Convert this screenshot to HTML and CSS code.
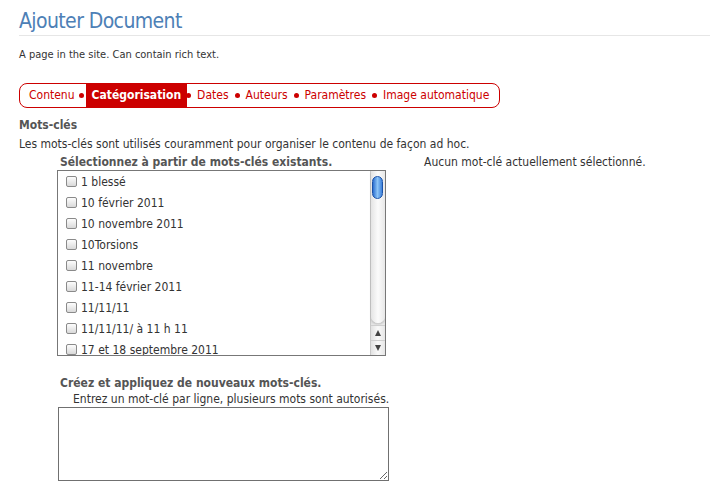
FILE: index.html
```html
<!DOCTYPE html>
<html lang="fr">
<head>
<meta charset="utf-8">
<title>Ajouter Document</title>
<link rel="stylesheet" href="styles.css">
</head>
<body>
<div class="page">
  <h1 class="title">Ajouter Document</h1>
  <p class="doc-desc">A page in the site. Can contain rich text.</p>

  <nav class="tabs">
    <span class="tab">Contenu</span><span class="dot"></span>
    <span class="tab active">Catégorisation</span><span class="dot"></span>
    <span class="tab">Dates</span><span class="dot"></span>
    <span class="tab">Auteurs</span><span class="dot"></span>
    <span class="tab">Paramètres</span><span class="dot"></span>
    <span class="tab">Image automatique</span>
  </nav>

  <section class="field">
    <div class="field-label">Mots-clés</div>
    <div class="field-help">Les mots-clés sont utilisés couramment pour organiser le contenu de façon ad hoc.</div>

    <div class="kw-row">
      <div class="kw-select">
        <div class="sub-label">Sélectionnez à partir de mots-clés existants.</div>
        <div class="listbox">
          <ul class="items">
            <li class="item"><span class="check"></span>1 blessé</li>
            <li class="item"><span class="check"></span>10 février 2011</li>
            <li class="item"><span class="check"></span>10 novembre 2011</li>
            <li class="item"><span class="check"></span>10Torsions</li>
            <li class="item"><span class="check"></span>11 novembre</li>
            <li class="item"><span class="check"></span>11-14 février 2011</li>
            <li class="item"><span class="check"></span>11/11/11</li>
            <li class="item"><span class="check"></span>11/11/11/ à 11 h 11</li>
            <li class="item"><span class="check"></span>17 et 18 septembre 2011</li>
          </ul>
          <div class="scrollbar">
            <div class="track"><div class="thumb"></div></div>
            <div class="arrow up"><span class="tri-up"></span></div>
            <div class="arrow down"><span class="tri-down"></span></div>
          </div>
        </div>
      </div>
      <div class="kw-current">Aucun mot-clé actuellement sélectionné.</div>
    </div>

    <div class="kw-new">
      <div class="sub-label">Créez et appliquez de nouveaux mots-clés.</div>
      <div class="sub-help">Entrez un mot-clé par ligne, plusieurs mots sont autorisés.</div>
      <textarea class="kw-text"></textarea>
    </div>
  </section>
</div>
</body>
</html>
```
FILE: styles.css
```css
* { box-sizing: border-box; }
html, body { margin: 0; padding: 0; background: #fff; }
body {
  font-family: "DejaVu Sans Condensed", "DejaVu Sans", sans-serif;
  color: #333;
  font-size: 12px;
}
.page { padding: 0 10px 0 19px; }

.title {
  margin: 0;
  padding: 8px 0 1px;
  font-size: 21px;
  line-height: 26px;
  letter-spacing: -0.6px;
  font-weight: normal;
  color: #4d80b6;
  border-bottom: 1px solid #e6e6e6;
}
.doc-desc {
  margin: 12px 0 0;
  font-size: 11px;
  line-height: 14px;
  color: #333;
}

.tabs {
  margin-top: 21px;
  display: inline-flex;
  align-items: center;
  height: 25px;
  border: 1px solid #cc0000;
  border-radius: 8px;
  padding: 0 10px 0 9px;
}
.tab {
  color: #cc0000;
  line-height: 23px;
  padding: 0 6px;
  white-space: nowrap;
}
.tab:first-child { padding-left: 0; padding-right: 4px; }
.tab:last-child { padding-right: 0; }
.tab.active {
  background: #cc0000;
  color: #fff;
  font-weight: bold;
  padding: 0 6px;
  margin: 0 -1px 0 2px;
  align-self: stretch;
  line-height: 23px;
}
.dot {
  width: 5px;
  height: 5px;
  border-radius: 50%;
  background: #cc0000;
  flex: none;
}

.field-label {
  margin-top: 8px;
  font-weight: bold;
  color: #555;
  line-height: 18px;
}
.field-help {
  margin-top: 1px;
  line-height: 18px;
}
.kw-row {
  display: flex;
  align-items: flex-start;
  gap: 38px;
  padding-left: 38px;
}
.sub-label {
  font-weight: bold;
  color: #555;
  line-height: 16px;
  padding-left: 3px;
}
.kw-select .sub-label,
.kw-current {
  line-height: 15px;
  padding-top: 2px;
}

.listbox {
  width: 329px;
  height: 186px;
  border: 1px solid #777;
  display: flex;
  overflow: hidden;
}
.items {
  list-style: none;
  margin: 0;
  padding: 0 0 0 8px;
  flex: 1;
  overflow: hidden;
}
.item {
  height: 21px;
  line-height: 20px;
  display: flex;
  align-items: center;
  font-size: 12px;
  color: #333;
  white-space: nowrap;
}
.check {
  width: 11px;
  height: 11px;
  border: 1px solid #8a8a8a;
  border-radius: 2px;
  background: linear-gradient(#fdfdfd, #d9d9d9);
  margin-right: 4px;
  flex: none;
}

.scrollbar {
  width: 15px;
  flex: none;
  border-left: 1px solid #c8c8c8;
  display: flex;
  flex-direction: column;
  background: linear-gradient(90deg, #e2e2e2, #fafafa 50%, #e6e6e6);
}
.track {
  flex: 1;
  padding: 5px 1px 0 1px;
  border-bottom-left-radius: 7px;
  border-bottom-right-radius: 7px;
  box-shadow: 0 2px 2px rgba(0,0,0,0.18);
  background: linear-gradient(90deg, #e4e4e4, #fbfbfb 50%, #e8e8e8);
}
.thumb {
  width: 11px;
  height: 23px;
  border-radius: 6px;
  border: 1px solid #1b52a8;
  background: linear-gradient(90deg, #2c6fd0, #8cc4f7 50%, #3d80da);
}
.arrow {
  height: 15px;
  display: flex;
  align-items: center;
  justify-content: center;
}
.arrow.up { border-top: 1px solid #cfcfcf; margin-top: 2px; }
.arrow.down { border-top: 1px solid #cfcfcf; }
.tri-up, .tri-down {
  width: 0;
  height: 0;
  border-left: 3px solid transparent;
  border-right: 3px solid transparent;
}
.tri-up { border-bottom: 6px solid #444; }
.tri-down { border-top: 6px solid #444; }

.kw-new {
  margin-top: 19px;
  padding-left: 38px;
}
.sub-help {
  line-height: 16px;
  padding-left: 16px;
}
.kw-text {
  display: block;
  margin-left: 1px;
  width: 331px;
  height: 74px;
  border: 1px solid #707070;
  resize: both;
  padding: 2px;
  font: inherit;
}
```
